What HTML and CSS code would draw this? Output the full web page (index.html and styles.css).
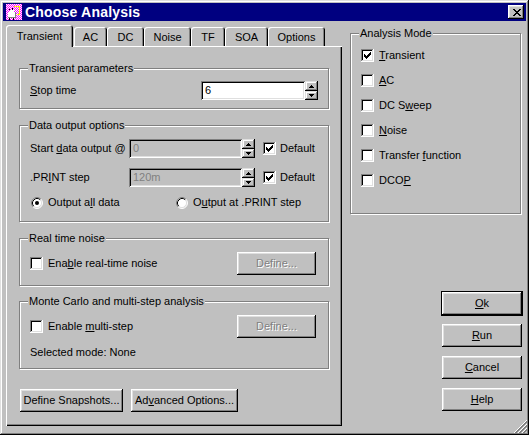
FILE: index.html
```html
<!DOCTYPE html>
<html>
<head>
<meta charset="utf-8">
<title>Choose Analysis</title>
<link rel="stylesheet" href="styles.css">
</head>
<body>
<svg class="defs" width="0" height="0" aria-hidden="true">
  <defs>
    <symbol id="cb" viewBox="0 0 13 13">
      <path fill="#808080" d="M0 0h12v1H1v11H0z"/>
      <path fill="#fff" d="M12 0h1v13H0v-1h12z"/>
      <path fill="#000" d="M1 1h10v1H2v9H1z"/>
      <path fill="#dfdfdf" d="M11 1h1v11H1v-1h10z"/>
      <rect x="2" y="2" width="9" height="9" fill="#fff"/>
    </symbol>
    <symbol id="ck" viewBox="0 0 13 13">
      <path fill="#000" d="M3 5h1v3H3zM4 6h1v3H4zM5 7h1v3H5zM6 6h1v3H6zM7 5h1v3H7zM8 4h1v3H8zM9 3h1v3H9z"/>
    </symbol>
    <symbol id="rb" viewBox="0 0 12 12">
      <circle cx="6" cy="6" r="5" fill="#fff"/>
      <path d="M2.11 9.89A5.5 5.5 0 0 1 9.89 2.11" stroke="#808080" fill="none"/>
      <path d="M9.89 2.11A5.5 5.5 0 0 1 2.11 9.89" stroke="#fff" fill="none"/>
      <path d="M2.82 9.18A4.5 4.5 0 0 1 9.18 2.82" stroke="#000" fill="none"/>
      <path d="M9.18 2.82A4.5 4.5 0 0 1 2.82 9.18" stroke="#dfdfdf" fill="none"/>
    </symbol>
    <symbol id="dot" viewBox="0 0 12 12">
      <circle cx="6" cy="6" r="2" fill="#000"/>
    </symbol>
    <symbol id="up" viewBox="0 0 5 3">
      <path d="M2 0h1v1h1v1h1v1H0V2h1V1h1z"/>
    </symbol>
    <symbol id="down" viewBox="0 0 5 3">
      <path d="M0 0h5v1H4v1H3v1H2V2H1V1H0z"/>
    </symbol>
    <pattern id="dith" width="2" height="2" patternUnits="userSpaceOnUse">
      <rect width="2" height="2" fill="#ff00ff"/>
      <rect width="1" height="1" fill="#fff"/>
      <rect x="1" y="1" width="1" height="1" fill="#fff"/>
    </pattern>
  </defs>
</svg>

<div class="window">
  <div class="titlebar">
    <svg class="app-icon" viewBox="0 0 16 16" shape-rendering="crispEdges">
      <rect width="16" height="16" fill="url(#dith)"/>
      <path fill="#fff" d="M2 8h2V6h4v2h2v6H2z"/>
      <path fill="#808080" d="M2 13h8v1H2zM9 8h1v6H9z"/>
      <path fill="#000" d="M3 5h1v1H3zM6 4h1v2H6zM3 14h1v2H3zM7 14h1v2H7z"/>
      <path fill="#ffff00" d="M8 2h6v1H8zM13 3h1v7h-1zM11 10h3v1h-3z"/>
    </svg>
    <span class="title">Choose Analysis</span>
    <div class="close">
      <svg width="8" height="7" viewBox="0 0 8 7" shape-rendering="crispEdges"><path fill="#000" d="M0 0h2v1H0zM6 0h2v1H6zM1 1h2v1H1zM5 1h2v1H5zM2 2h4v1H2zM3 3h2v1H3zM2 4h4v1H2zM1 5h2v1H1zM5 5h2v1H5zM0 6h2v1H0zM6 6h2v1H6z"/></svg>
    </div>
  </div>

  <div class="content">
    <div class="left">
      <div class="tabs">
        <div class="tab sel w-transient">Transient</div>
        <div class="tab w-ac">AC</div>
        <div class="tab w-dc">DC</div>
        <div class="tab w-noise">Noise</div>
        <div class="tab w-tf">TF</div>
        <div class="tab w-soa">SOA</div>
        <div class="tab w-options">Options</div>
      </div>
      <div class="panel">
        <div class="group g1">
          <span class="legend">Transient parameters</span>
          <div class="row">
            <span class="lbl lbl-stop"><u>S</u>top time</span>
            <div class="edit e-stop">6</div>
            <div class="spin">
              <div class="spin-btn top"><svg width="5" height="3"><use href="#up"/></svg></div>
              <div class="spin-btn bot"><svg width="5" height="3"><use href="#down"/></svg></div>
            </div>
          </div>
        </div>

        <div class="group g2">
          <span class="legend">Data output options</span>
          <div class="row">
            <span class="lbl lbl-data">Start <u>d</u>ata output @</span>
            <div class="edit dis e-data">0</div>
            <div class="spin">
              <div class="spin-btn top"><svg width="5" height="3"><use href="#up"/></svg></div>
              <div class="spin-btn bot"><svg width="5" height="3"><use href="#down"/></svg></div>
            </div>
            <label class="chk chk-default"><svg class="box"><use href="#cb"/><use href="#ck"/></svg><span>Default</span></label>
          </div>
          <div class="row row2">
            <span class="lbl lbl-data">.PR<u>I</u>NT step</span>
            <div class="edit dis e-data">120m</div>
            <div class="spin">
              <div class="spin-btn top"><svg width="5" height="3"><use href="#up"/></svg></div>
              <div class="spin-btn bot"><svg width="5" height="3"><use href="#down"/></svg></div>
            </div>
            <label class="chk chk-default"><svg class="box"><use href="#cb"/><use href="#ck"/></svg><span>Default</span></label>
          </div>
          <div class="row row3">
            <label class="radio r-all"><svg class="rbox"><use href="#rb"/><use href="#dot"/></svg><span>Output a<u>l</u>l data</span></label>
            <label class="radio"><svg class="rbox"><use href="#rb"/></svg><span>O<u>u</u>tput at .PRINT step</span></label>
          </div>
        </div>

        <div class="group g3">
          <span class="legend">Real time noise</span>
          <div class="row">
            <label class="chk"><svg class="box"><use href="#cb"/></svg><span>Ena<u>b</u>le real-time noise</span></label>
            <button class="btn define dis-text">Define...</button>
          </div>
        </div>

        <div class="group g4">
          <span class="legend">Monte Carlo and multi-step analysis</span>
          <div class="row">
            <label class="chk"><svg class="box"><use href="#cb"/></svg><span>Enable <u>m</u>ulti-step</span></label>
            <button class="btn define dis-text">Define...</button>
          </div>
          <div class="selmode">Selected mode: None</div>
        </div>

        <div class="bottom-btns">
          <button class="btn b-snap">Define Snapshots...</button>
          <button class="btn b-adv">Ad<u>v</u>anced Options...</button>
        </div>
      </div>
    </div>

    <div class="right">
      <div class="group mode">
        <span class="legend">Analysis Mode</span>
        <div class="modes">
          <label class="chk"><svg class="box"><use href="#cb"/><use href="#ck"/></svg><span><u>T</u>ransient</span></label>
          <label class="chk"><svg class="box"><use href="#cb"/></svg><span><u>A</u>C</span></label>
          <label class="chk"><svg class="box"><use href="#cb"/></svg><span>DC S<u>w</u>eep</span></label>
          <label class="chk"><svg class="box"><use href="#cb"/></svg><span><u>N</u>oise</span></label>
          <label class="chk"><svg class="box"><use href="#cb"/></svg><span>Transfer <u>f</u>unction</span></label>
          <label class="chk"><svg class="box"><use href="#cb"/></svg><span>DCO<u>P</u></span></label>
        </div>
      </div>
      <button class="btn ok"><u>O</u>k</button>
      <button class="btn side b-run"><u>R</u>un</button>
      <button class="btn side"><u>C</u>ancel</button>
      <button class="btn side"><u>H</u>elp</button>
    </div>
  </div>

  <svg class="grip" viewBox="0 0 14 14" aria-hidden="true">
    <g fill="none" stroke-width="1">
      <path d="M14 1L1 14" stroke="#fff"/>
      <path d="M14 2L2 14" stroke="#808080"/>
      <path d="M14 3L3 14" stroke="#808080"/>
      <path d="M14 5L5 14" stroke="#fff"/>
      <path d="M14 6L6 14" stroke="#808080"/>
      <path d="M14 7L7 14" stroke="#808080"/>
      <path d="M14 9L9 14" stroke="#fff"/>
      <path d="M14 10L10 14" stroke="#808080"/>
      <path d="M14 11L11 14" stroke="#808080"/>
    </g>
  </svg>
</div>
</body>
</html>
```

FILE: styles.css
```css
* { box-sizing: border-box; }
html, body { margin: 0; padding: 0; }
body {
  width: 529px;
  height: 435px;
  overflow: hidden;
  background: #c0c0c0;
  font-family: "Liberation Sans", Arial, sans-serif;
  font-size: 11px;
  line-height: 13px;
  color: #000;
}
.defs { position: absolute; width: 0; height: 0; overflow: hidden; }
u { text-decoration: underline; text-underline-offset: 1px; }

.window {
  position: relative;
  width: 529px;
  height: 435px;
  padding: 3px;
  background: #c0c0c0;
  box-shadow: inset -1px -1px #000, inset 1px 1px #dfdfdf, inset -2px -2px #808080, inset 2px 2px #fff;
}

/* title bar */
.titlebar {
  height: 18px;
  background: #000080;
  color: #fff;
  display: flex;
  align-items: center;
  padding: 0 2px 0 3px;
}
.app-icon { width: 16px; height: 16px; flex: none; }
.title {
  flex: 1;
  margin-left: 3px;
  font-weight: bold;
  font-size: 14px;
  letter-spacing: 0.2px;
  line-height: 16px;
  white-space: nowrap;
}
.close {
  width: 16px;
  height: 14px;
  background: #c0c0c0;
  display: flex;
  align-items: center;
  justify-content: center;
  padding-left: 1px;
  box-shadow: inset -1px -1px #000, inset 1px 1px #fff, inset -2px -2px #808080, inset 2px 2px #dfdfdf;
}

/* main */
.content { display: flex; align-items: flex-start; padding: 4px 0 0 3px; }
.left { width: 336px; flex: none; }

.tabs { display: flex; align-items: flex-end; height: 21px; }
.tab {
  height: 19px;
  display: flex;
  align-items: center;
  justify-content: center;
  background: #c0c0c0;
  border-radius: 3px 3px 0 0;
  box-shadow: inset 1px 1px #fff, inset -1px 0 #000, inset -2px 0 #808080;
  white-space: nowrap;
  padding-top: 1px;
}
.tab.sel {
  position: relative;
  z-index: 1;
  height: 22px;
  margin-bottom: -1px;
  margin-right: 1px;
  padding-top: 0;
}
.w-transient { width: 67px; }
.w-ac { width: 33px; }
.w-dc { width: 37px; }
.w-noise { width: 47px; }
.w-tf { width: 34px; }
.w-soa { width: 43px; }
.w-options { width: 57px; }

.panel {
  height: 380px;
  padding: 22px 0 0 13px;
  box-shadow: inset 1px 1px #fff, inset -1px -1px #000, inset -2px -2px #808080;
}

/* group boxes */
.group {
  position: relative;
  border: 1px solid #808080;
  box-shadow: inset 1px 1px #fff, 1px 1px #fff;
}
.legend {
  position: absolute;
  top: -7px;
  left: 8px;
  padding: 0 1px;
  background: #c0c0c0;
  line-height: 13px;
  white-space: nowrap;
}
.g1, .g2, .g3, .g4 { width: 310px; padding-left: 10px; }
.g1 { height: 41px; padding-top: 12px; }
.g2 { height: 97px; padding-top: 13px; margin-top: 16px; }
.g3 { height: 48px; padding-top: 13px; padding-right: 12px; margin-top: 16px; }
.g4 { height: 68px; padding-top: 13px; padding-right: 12px; margin-top: 15px; }

.row { display: flex; align-items: center; }
.row2 { margin-top: 10px; }
.row3 { margin-top: 9px; height: 13px; }
.lbl { white-space: nowrap; flex: none; }
.lbl-stop { width: 171px; }
.lbl-data { width: 99px; }

.edit {
  height: 19px;
  flex: none;
  display: flex;
  align-items: center;
  padding: 0 4px;
  background: #fff;
  box-shadow: inset 1px 1px #808080, inset -1px -1px #fff, inset 2px 2px #000, inset -2px -2px #dfdfdf;
}
.edit.dis { background: #c0c0c0; color: #808080; }
.e-stop { width: 104px; }
.e-data { width: 113px; }

.spin { width: 13px; height: 19px; display: flex; flex-direction: column; flex: none; }
.spin-btn {
  display: flex;
  align-items: center;
  justify-content: center;
  background: #c0c0c0;
  box-shadow: inset -1px -1px #000, inset 1px 1px #dfdfdf, inset -2px -2px #808080, inset 2px 2px #fff;
}
.spin-btn.top { height: 10px; }
.spin-btn.bot { height: 9px; }
.spin-btn svg { display: block; fill: #000; }

.chk { display: flex; align-items: center; gap: 5px; white-space: nowrap; }
.chk .box { width: 13px; height: 13px; flex: none; display: block; }
.chk-default { margin-left: 8px; gap: 4px; }

.radio { display: flex; align-items: center; gap: 5px; white-space: nowrap; padding-left: 1px; }
.radio .rbox { width: 12px; height: 12px; flex: none; display: block; }
.r-all { width: 145px; }

.btn {
  font: inherit;
  color: #000;
  background: #c0c0c0;
  border: none;
  padding: 0;
  margin: 0;
  height: 23px;
  display: flex;
  align-items: center;
  justify-content: center;
  white-space: nowrap;
  box-shadow: inset -1px -1px #000, inset 1px 1px #fff, inset -2px -2px #808080, inset 2px 2px #dfdfdf;
}
.dis-text { color: #808080; text-shadow: 1px 1px #fff; }
.define { width: 79px; margin-left: auto; }

.selmode { margin-top: 8px; }

.bottom-btns { display: flex; margin-top: 20px; padding-left: 1px; }
.b-snap { width: 103px; }
.b-adv { width: 107px; margin-left: 8px; }

/* right column */
.right { width: 173px; flex: none; margin-left: 8px; margin-top: 8px; }
.mode { width: 171px; height: 181px; padding: 15px 0 0 10px; }
.modes { display: flex; flex-direction: column; gap: 12px; }

.ok {
  width: 82px;
  height: 25px;
  margin: 77px 0 0 91px;
  box-shadow: inset -1px -1px #000, inset 1px 1px #000, inset -2px -2px #000, inset 2px 2px #fff, inset -3px -3px #808080, inset 3px 3px #dfdfdf;
}
.side { width: 80px; margin: 9px 0 0 92px; }
.b-run { margin-top: 8px; }

.grip {
  position: absolute;
  right: 2px;
  bottom: 2px;
  width: 14px;
  height: 14px;
}
```
